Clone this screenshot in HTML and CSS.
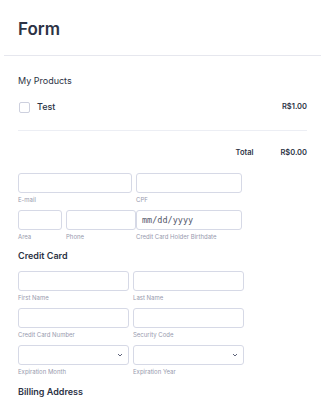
FILE: index.html
```html
<!DOCTYPE html>
<html lang="en">
<head>
  <meta charset="UTF-8">
  <meta name="viewport" content="width=device-width, initial-scale=1.0">
  <title>Form</title>
  <link rel="stylesheet" href="styles.css">
</head>
<body>
  <div class="page">
    <div class="header">
      <h1>Form</h1>
    </div>

    <div class="content">
      <div class="products-title">My Products</div>

      <div class="product">
        <span class="checkbox"></span>
        <span class="product-name">Test</span>
        <span class="price">R$1.00</span>
      </div>

      <div class="total">
        <span class="total-label">Total</span>
        <span class="price">R$0.00</span>
      </div>

      <div class="row row-contact">
        <div class="field">
          <input class="input" type="text">
          <label>E-mail</label>
        </div>
        <div class="field">
          <input class="input" type="text">
          <label>CPF</label>
        </div>
      </div>

      <div class="row row-phone">
        <div class="field">
          <input class="input" type="text">
          <label>Area</label>
        </div>
        <div class="field">
          <input class="input" type="text">
          <label>Phone</label>
        </div>
        <div class="field field-date">
          <div class="input date">mm/dd/yyyy</div>
          <label>Credit Card Holder Birthdate</label>
        </div>
      </div>

      <h2>Credit Card</h2>

      <div class="row row-card">
        <div class="field">
          <input class="input" type="text">
          <label>First Name</label>
        </div>
        <div class="field">
          <input class="input" type="text">
          <label>Last Name</label>
        </div>
      </div>

      <div class="row row-card">
        <div class="field">
          <input class="input" type="text">
          <label>Credit Card Number</label>
        </div>
        <div class="field">
          <input class="input" type="text">
          <label>Security Code</label>
        </div>
      </div>

      <div class="row row-card">
        <div class="field">
          <div class="input select">
            <svg width="6" height="4" viewBox="0 0 6 4"><path d="M1 1l2 2 2-2" fill="none" stroke="#5f647a" stroke-width="1"/></svg>
          </div>
          <label>Expiration Month</label>
        </div>
        <div class="field">
          <div class="input select">
            <svg width="6" height="4" viewBox="0 0 6 4"><path d="M1 1l2 2 2-2" fill="none" stroke="#5f647a" stroke-width="1"/></svg>
          </div>
          <label>Expiration Year</label>
        </div>
      </div>

      <h2 class="billing">Billing Address</h2>
    </div>
  </div>
</body>
</html>
```

FILE: styles.css
```css
body {
  margin: 0;
  font-family: Inter, "Noto Sans", sans-serif;
  color: #2c3345;
  background-color: #fff;
}
.page {
  padding: 0 4px;
}
.header {
  padding: 17px 14px 14px;
  border-bottom: 1px solid #e6e7ee;
}
h1 {
  margin: 0;
  font-size: 17px;
  line-height: 24px;
  font-weight: 600;
}
.content {
  padding: 0 14px;
  width: 289px;
}
.products-title {
  margin-top: 19px;
  font-size: 9px;
  line-height: 12px;
  font-weight: 400;
}
.product {
  display: flex;
  align-items: center;
  margin-top: 14px;
  padding-bottom: 17px;
  border-bottom: 1px solid #eceef4;
}
.checkbox {
  width: 9px;
  height: 9px;
  margin-left: 1px;
  border: 1px solid #cdd0de;
  border-radius: 2px;
}
.product-name {
  margin-left: 7px;
  font-size: 9px;
  font-weight: 500;
  line-height: 12px;
}
.price {
  margin-left: auto;
  font-size: 7.5px;
  font-weight: 600;
  line-height: 12px;
}
.total {
  display: flex;
  justify-content: flex-end;
  align-items: center;
  gap: 27px;
  margin-top: 16px;
}
.total .price {
  margin-left: 0;
}
.total-label {
  font-size: 7.5px;
  font-weight: 600;
  line-height: 12px;
}
.row {
  display: grid;
  gap: 4px;
  margin-bottom: 5px;
}
.row-contact {
  margin-top: 14px;
  grid-template-columns: 114px 106px;
}
.row-phone {
  grid-template-columns: 44px 70px 106px;
}
.field-date {
  margin-left: -4px;
  width: 106px;
}
.row-card {
  grid-template-columns: 111px 111px;
}
.field {
  display: flex;
  flex-direction: column;
}
.input {
  box-sizing: border-box;
  height: 20px;
  width: 100%;
  margin: 0;
  padding: 0 6px;
  border: 1px solid #d6d9e6;
  border-radius: 3px;
  background-color: #fff;
  font-family: inherit;
}
.date {
  display: flex;
  align-items: center;
  padding-left: 5px;
  font-family: "DejaVu Sans Mono", monospace;
  font-size: 8.5px;
  color: #55596b;
}
.select {
  display: flex;
  align-items: center;
  justify-content: flex-end;
  padding-right: 5px;
}
label {
  margin-top: 2px;
  font-size: 6px;
  line-height: 10px;
  color: #979aae;
}
h2 {
  margin: 8px 0 9px;
  font-size: 9px;
  line-height: 12px;
  font-weight: 600;
}
h2.billing {
  margin-top: 9px;
}
```
